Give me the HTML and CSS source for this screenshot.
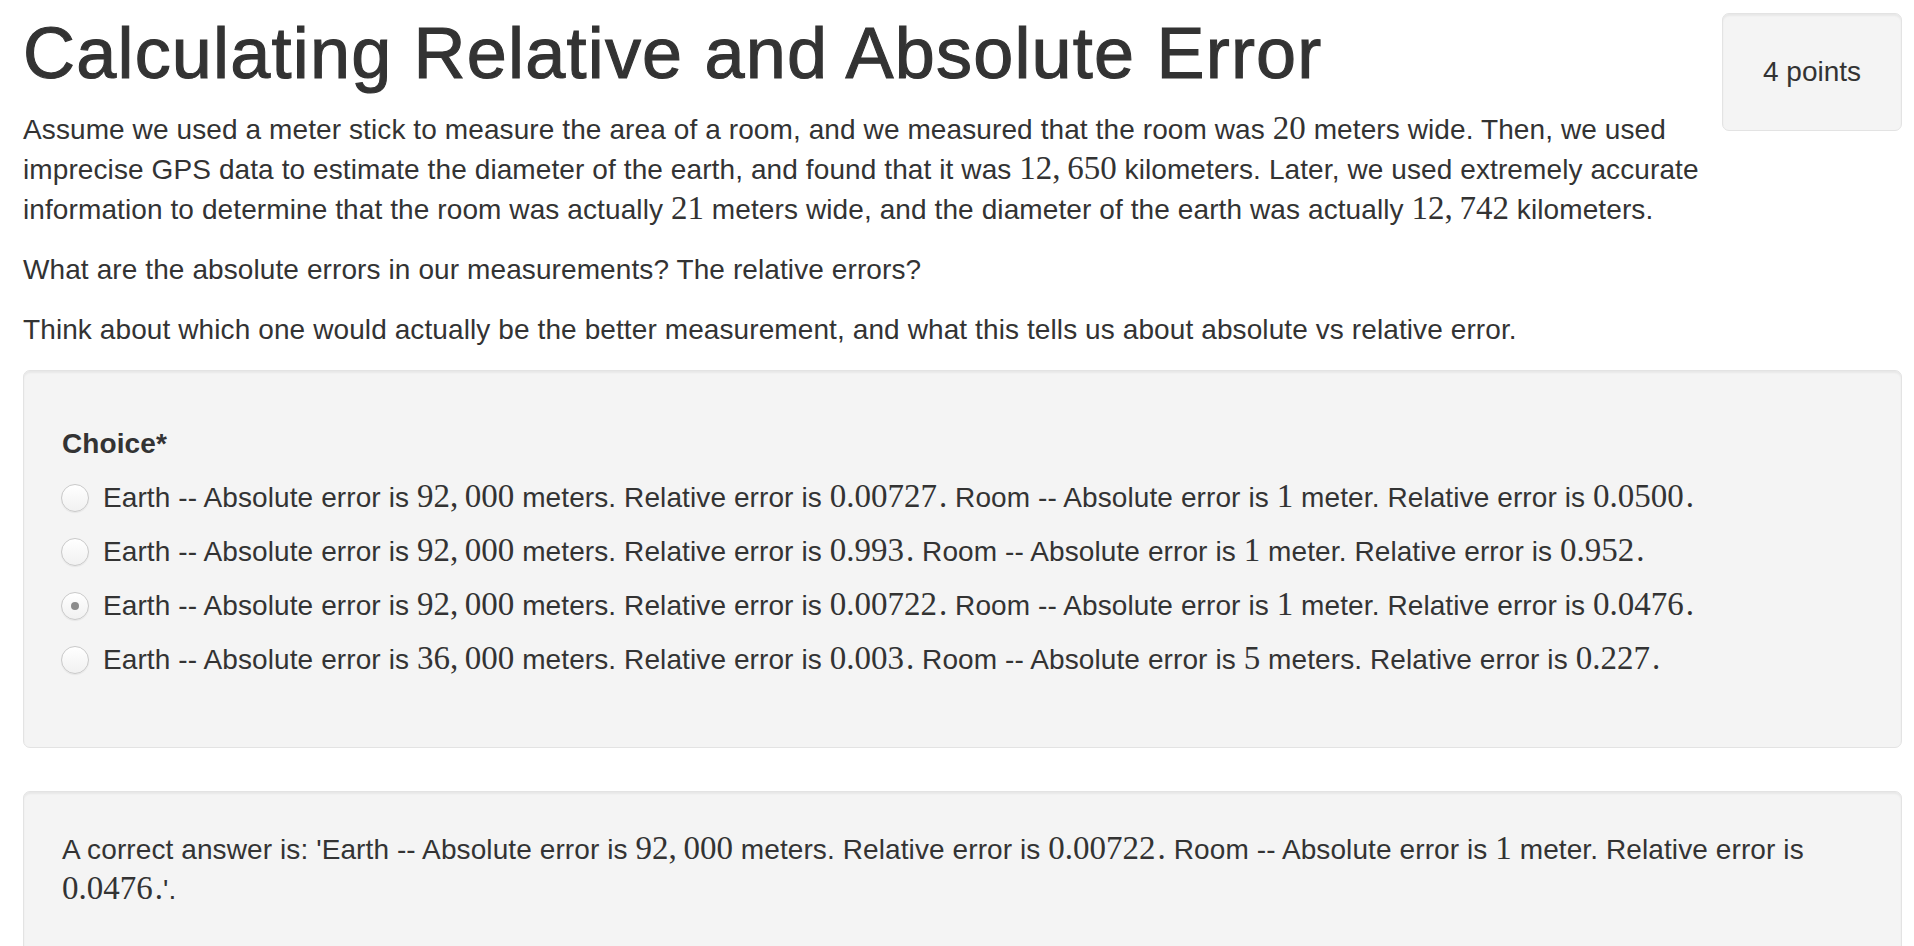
FILE: index.html
```html
<!DOCTYPE html>
<html lang="en">
<head>
<meta charset="utf-8">
<title>Calculating Relative and Absolute Error</title>
<link rel="stylesheet" href="styles.css">
</head>
<body>
<div class="page">
  <div class="header">
    <div class="main">
      <h1 class="title">Calculating Relative and Absolute Error</h1>
      <p class="text">Assume we used a meter stick to measure the area of a room, and we measured that the room was <span class="m">20</span> meters wide. Then, we used imprecise GPS data to estimate the diameter of the earth, and found that it was <span class="m">12,<span class="th"></span>650</span> kilometers. Later, we used extremely accurate information to determine that the room was actually <span class="m">21</span> meters wide, and the diameter of the earth was actually <span class="m">12,<span class="th"></span>742</span> kilometers.</p>
      <p class="text">What are the absolute errors in our measurements? The relative errors?</p>
      <p class="text">Think about which one would actually be the better measurement, and what this tells us about absolute vs relative error.</p>
    </div>
    <div class="well points">4 points</div>
  </div>

  <div class="well choices">
    <div class="label">Choice*</div>
    <div class="opt"><span class="dot"></span><span>Earth -- Absolute error is <span class="m">92,<span class="th"></span>000</span> meters. Relative error is <span class="m">0.00727<span class="pd">.</span></span> Room -- Absolute error is <span class="m">1</span> meter. Relative error is <span class="m">0.0500<span class="pd">.</span></span></span></div>
    <div class="opt"><span class="dot"></span><span>Earth -- Absolute error is <span class="m">92,<span class="th"></span>000</span> meters. Relative error is <span class="m">0.993<span class="pd">.</span></span> Room -- Absolute error is <span class="m">1</span> meter. Relative error is <span class="m">0.952<span class="pd">.</span></span></span></div>
    <div class="opt"><span class="dot checked"></span><span>Earth -- Absolute error is <span class="m">92,<span class="th"></span>000</span> meters. Relative error is <span class="m">0.00722<span class="pd">.</span></span> Room -- Absolute error is <span class="m">1</span> meter. Relative error is <span class="m">0.0476<span class="pd">.</span></span></span></div>
    <div class="opt"><span class="dot"></span><span>Earth -- Absolute error is <span class="m">36,<span class="th"></span>000</span> meters. Relative error is <span class="m">0.003<span class="pd">.</span></span> Room -- Absolute error is <span class="m">5</span> meters. Relative error is <span class="m">0.227<span class="pd">.</span></span></span></div>
  </div>

  <div class="well answer">
    <p class="text">A correct answer is: 'Earth -- Absolute error is <span class="m">92,<span class="th"></span>000</span> meters. Relative error is <span class="m">0.00722<span class="pd">.</span></span> Room -- Absolute error is <span class="m">1</span> meter. Relative error is <span class="m">0.0476<span class="pd">.</span></span>'.</p>
  </div>
</div>
</body>
</html>
```
FILE: styles.css
```css
html, body {
  margin: 0;
  padding: 0;
  background: #ffffff;
}
body {
  font-family: "Liberation Sans", Arial, sans-serif;
  font-size: 28px;
  line-height: 40px;
  color: #333333;
}
.page {
  padding: 13px 12px 0 23px;
}
.header {
  display: flex;
  align-items: flex-start;
}
.main {
  flex: 1;
  min-width: 0;
}
.title {
  margin: 1px 0 17px 0;
  font-size: 72px;
  line-height: 79.2px;
  font-weight: 500;
  letter-spacing: 1.2px;
  -webkit-text-stroke: 1.1px #333333;
  color: #333333;
}
.text {
  margin: 0 0 20px 0;
  letter-spacing: 0.1px;
}
.m {
  font-family: "Liberation Serif", "Times New Roman", serif;
  font-size: 33px;
  line-height: 1;
  letter-spacing: 0;
}
.th {
  display: inline-block;
  width: 0.2em;
}
.pd {
  margin-left: 2px;
}
.well {
  background: #f4f4f4;
  border: 1px solid #e3e3e3;
  border-radius: 7px;
  box-shadow: inset 0 2px 2px rgba(0, 0, 0, 0.05);
  padding: 38px;
}
.points {
  flex: none;
  width: 102px;
  text-align: center;
}
.choices {
  padding-top: 53px;
  padding-bottom: 67px;
  letter-spacing: 0.1px;
}
.label {
  font-weight: bold;
  margin-bottom: 14px;
}
.opt {
  display: flex;
  align-items: center;
  height: 40px;
  margin-bottom: 14px;
  white-space: nowrap;
}
.opt:last-child {
  margin-bottom: 0;
}
.dot {
  flex: none;
  box-sizing: border-box;
  width: 28px;
  height: 28px;
  margin-left: -1px;
  margin-right: 14px;
  border-radius: 50%;
  border: 1px solid #c9c9c9;
  background: linear-gradient(#ffffff, #f1f1f1);
  box-shadow: 0 1px 1px rgba(0, 0, 0, 0.06);
  display: flex;
  align-items: center;
  justify-content: center;
}
.dot.checked::after {
  content: "";
  width: 8px;
  height: 8px;
  border-radius: 50%;
  background: #8c8c8c;
}
.answer {
  margin-top: 43px;
}
.answer .text {
  margin: 0;
  padding-bottom: 40px;
}
```
